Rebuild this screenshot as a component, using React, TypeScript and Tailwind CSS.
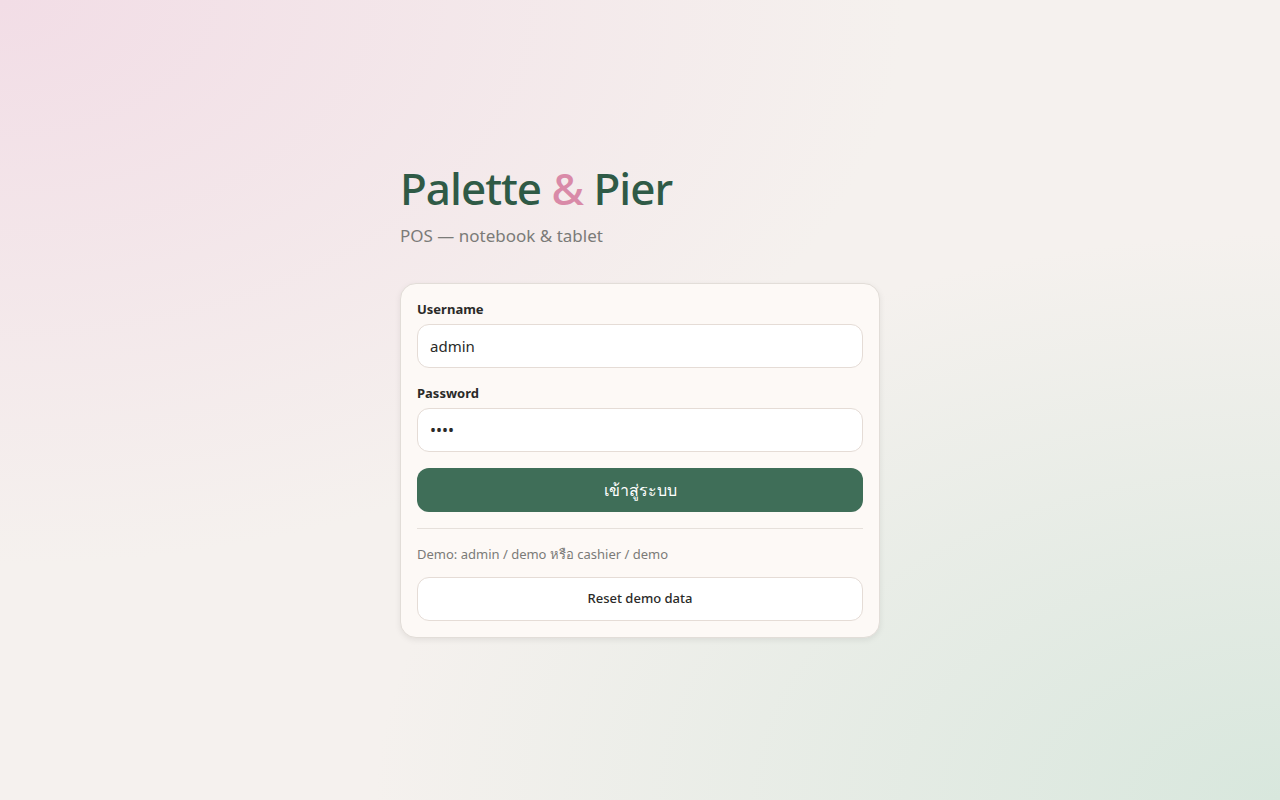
import React from "react";

export default function App() {
  return (
    <div
      className="min-h-screen w-full bg-[#f5f1ee] bg-[radial-gradient(ellipse_at_top_left,#f2dde6_0%,rgba(245,241,238,0)_50%),radial-gradient(ellipse_at_bottom_right,#d8e7dd_0%,rgba(245,241,238,0)_50%)] flex justify-center"
      style={{ fontFamily: '"Noto Sans", "Open Sans", sans-serif' }}
    >
      <div className="w-[480px] pt-[160px]">
        <h1 className="text-[44px] leading-[56px] font-medium tracking-[-1px] text-[#2f5a46]">
          Palette <span className="text-[#d98aa8]">&amp;</span> Pier
        </h1>
        <p className="mt-[8px] text-[17px] leading-[24px] text-[#7b7b78]">POS — notebook &amp; tablet</p>

        <div className="mt-[35px] rounded-[16px] border border-[#e2ddd8] bg-[#fdf9f6] p-[16px] shadow-[0_2px_6px_rgba(0,0,0,0.08)]">
          <label className="block text-[13px] leading-[18px] font-bold text-[#2a2a28]">Username</label>
          <div className="mt-[6px] h-[44px] rounded-[12px] border border-[#e5dcd6] bg-white px-[12px] flex items-center text-[15px] text-[#2a2a28]">
            admin
          </div>
          <label className="mt-[16px] block text-[13px] leading-[18px] font-bold text-[#2a2a28]">Password</label>
          <div className="mt-[6px] h-[44px] rounded-[12px] border border-[#e5dcd6] bg-white px-[12px] flex items-center text-[16px] text-[#2a2a28]">
            ••••
          </div>
          <button className="mt-[16px] h-[44px] w-full rounded-[12px] bg-[#3f6e58] text-[16px] text-white">
            เข้าสู่ระบบ
          </button>
          <div className="mt-[16px] h-px bg-[#e6e0db]" />
          <p className="mt-[16px] text-[13px] leading-[18px] text-[#7b7b78]">Demo: admin / demo หรือ cashier / demo</p>
          <button className="mt-[14px] h-[44px] w-full rounded-[12px] border border-[#e5dcd6] bg-white text-[13px] font-medium text-[#2a2a28]">
            Reset demo data
          </button>
        </div>
      </div>
    </div>
  );
}
